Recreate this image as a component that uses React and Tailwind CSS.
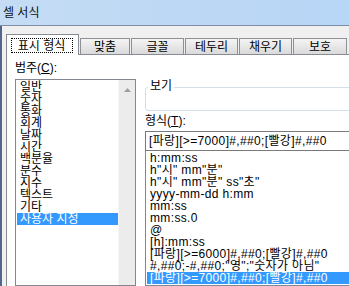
export default function App() {
  const cats = ["일반", "숫자", "통화", "회계", "날짜", "시간", "백분율", "분수", "지수", "텍스트", "기타", "사용자 지정"];
  const fmts = [
    'h:mm:ss',
    'h"시" mm"분"',
    'h"시" mm"분" ss"초"',
    'yyyy-mm-dd h:mm',
    'mm:ss',
    'mm:ss.0',
    '@',
    '[h]:mm:ss',
    '[파랑][>=6000]#,##0;[빨강]#,##0',
    '#,##0;-#,##0;"영";"숫자가 아님"',
    '[파랑][>=7000]#,##0;[빨강]#,##0',
  ];
  const tabs = [
    { t: "맞춤", w: "w-[50px]" },
    { t: "글꼴", w: "w-[53px]" },
    { t: "테두리", w: "w-[53px]" },
    { t: "채우기", w: "w-[53px]" },
    { t: "보호", w: "w-[54px]" },
  ];
  return (
    <div className="w-[349px] h-[286px] overflow-hidden flex flex-col bg-[#f0f0f0] text-[12px] leading-[12px] text-black font-['Liberation_Sans','Noto_Sans_CJK_KR',sans-serif]">
      {/* title bar */}
      <div className="h-[26px] shrink-0 bg-linear-to-r from-[#c5dcf4] via-[#bdd8f4] to-[#b8d6f6] border-b border-[#7d8ea6] pl-[3px] pt-[7px] text-[#111]">
        셀 서식
      </div>
      {/* body */}
      <div className="flex-1 flex border-l-2 border-[#52658a] min-h-0">
        <div className="flex-1 flex flex-col pl-[4px] pt-[8px] min-w-0">
          {/* tabs */}
          <div className="flex items-end h-[20px] shrink-0 gap-[1px]">
            <div className="relative z-10 w-[73px] h-[21px] bg-white border border-b-0 border-[#898c95] mb-[-1px] flex items-start justify-center">
              <div className="mt-[3px] ml-[-2px] w-[62px] h-[15px] border border-dotted border-black flex items-center justify-center">
                표시 형식
              </div>
            </div>
            {tabs.map((x) => (
              <div
                key={x.t}
                className={`${x.w} h-[16px] shrink-0 border border-b-0 border-[#8e9096] bg-linear-to-b from-[#f4f4f4] to-[#dadada] flex items-center justify-center pt-[1px]`}
              >
                {x.t}
              </div>
            ))}
          </div>
          {/* panel */}
          <div className="flex-1 bg-white border-t border-l border-[#898c95] flex pl-[8px] min-h-0">
            {/* left column */}
            <div className="w-[121px] shrink-0 flex flex-col pt-[7px]">
              <div className="h-[12px]">
                범주(<span className="underline">C</span>):
              </div>
              <div className="mt-[5px] flex-1 border border-[#828790] flex">
                <div className="flex-1 pt-[1px]">
                  {cats.map((c, i) => (
                    <div
                      key={c}
                      className={`h-[12px] ml-[1px] pl-[3px] whitespace-nowrap ${i === cats.length - 1 ? "bg-[#3399ff] text-white" : ""}`}
                    >
                      {c}
                    </div>
                  ))}
                </div>
                <div className="w-[17px] shrink-0 bg-[#ececec] border-l border-[#f6f6f6] flex justify-center pt-[8px]">
                  <svg width="7" height="4" viewBox="0 0 7 4">
                    <path d="M3.5 0 L7 4 L0 4 Z" fill="#a0a0a0" />
                  </svg>
                </div>
              </div>
            </div>
            {/* right column */}
            <div className="ml-[9px] w-[240px] shrink-0 flex flex-col">
              <div className="relative mt-[32px] h-[24px] border border-[#d5dfe5] rounded-[3px]">
                <div className="absolute left-[2px] top-[-8px] bg-white px-[2px]">보기</div>
              </div>
              <div className="mt-[4px] h-[12px]">
                형식(<span className="underline">T</span>):
              </div>
              <div className="mt-[4px] h-[20px] border border-[#7a7a7a] pl-[3px] pt-[3px] whitespace-nowrap tracking-[0.35px]">
                [파랑][&gt;=7000]#,##0;[빨강]#,##0
              </div>
              <div className="flex-1 border border-[#828790] border-t-0 pt-[1px] tracking-[0.35px]">
                {fmts.map((f, i) => (
                  <div
                    key={f}
                    className={`h-[12px] ml-[1px] pl-[3px] whitespace-nowrap ${i === fmts.length - 1 ? "bg-[#3399ff] text-white" : ""}`}
                  >
                    {f}
                  </div>
                ))}
              </div>
            </div>
          </div>
        </div>
      </div>
    </div>
  );
}
